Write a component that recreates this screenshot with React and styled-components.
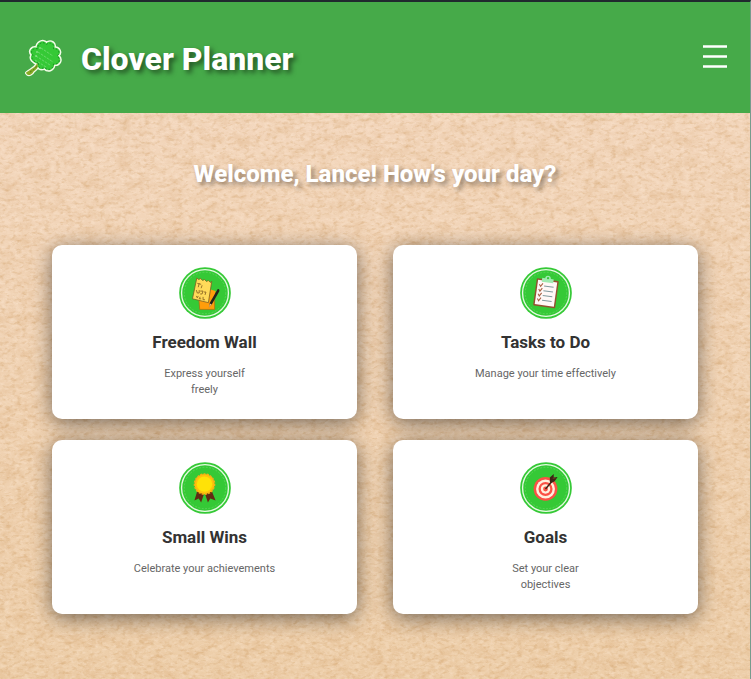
import React from "react";
import styled, { createGlobalStyle } from "styled-components";

const GlobalStyle = createGlobalStyle`
  *, *::before, *::after { box-sizing: border-box; }
  body {
    margin: 0;
    background: #f0d2b2;
    font-family: Roboto, sans-serif;
  }
`;

const Page = styled.div`
  position: relative;
  isolation: isolate;
  display: flex;
  flex-direction: column;
  min-height: 100vh;
  overflow: hidden;
  border-top: 2px solid #20292e;
  border-right: 1px solid #789b8d;
`;

const PaperTexture = styled.svg`
  position: absolute;
  inset: 0;
  z-index: -1;
  width: 100%;
  height: 100%;
`;

const Header = styled.header`
  display: flex;
  align-items: center;
  justify-content: space-between;
  padding: 32px 20px 32px 24px;
  background: #46aa49;
`;

const Brand = styled.div`
  display: flex;
  align-items: center;
  gap: 18px;
`;

const Logo = styled.svg`
  width: 39px;
  height: 39px;
`;

const BrandName = styled.h1`
  margin: 0;
  padding: 6px 0 3px;
  color: #fff;
  font-size: 32px;
  font-weight: 800;
  line-height: 38px;
  text-shadow: 3px 3px 5px rgba(0, 0, 0, 0.5);
`;

const MenuButton = styled.button`
  display: flex;
  padding: 2px 2px 6px;
  border: 0;
  background: none;
  color: #fff;
  cursor: pointer;
`;

const Main = styled.main`
  display: flex;
  flex-direction: column;
  gap: 56px;
  padding: 46px 52px 64px;
`;

const Welcome = styled.h2`
  margin: 0;
  color: #fff;
  font-size: 24px;
  font-weight: 800;
  line-height: 30px;
  text-align: center;
  text-shadow: 3px 3px 5px rgba(0, 0, 0, 0.4);
`;

const CardGrid = styled.div`
  display: grid;
  grid-template-columns: repeat(2, minmax(0, 1fr));
  gap: 21px 36px;
`;

const Card = styled.a`
  display: flex;
  flex-direction: column;
  align-items: center;
  min-height: 174px;
  padding: 21px 16px;
  border-radius: 10px;
  background: #fff;
  box-shadow: 0 4px 20px rgba(0, 0, 0, 0.5);
  text-align: center;
  text-decoration: none;
`;

const Badge = styled.svg`
  width: 54px;
  height: 54px;
`;

const CardTitle = styled.h3`
  margin: 12px 0 14px;
  color: #333;
  font-size: 17px;
  font-weight: 700;
  line-height: 20px;
`;

const CardText = styled.p`
  margin: 0;
  color: #666;
  font-size: 11px;
  line-height: 16px;
  white-space: pre-line;
`;

function Paper() {
  return (
    <PaperTexture aria-hidden="true">
      <defs>
        <linearGradient id="paper-tone" x1="0" y1="0" x2="0" y2="1">
          <stop offset="0" stopColor="#f4d8c0" />
          <stop offset="1" stopColor="#edcea9" />
        </linearGradient>
        <filter id="paper-grain" x="0" y="0" width="100%" height="100%" colorInterpolationFilters="sRGB">
          <feTurbulence type="fractalNoise" baseFrequency="0.06 0.09" numOctaves="5" seed="8" />
          <feColorMatrix values="0 0 0 0 0.82  0 0 0 0 0.62  0 0 0 0 0.4  0.6 0 0 0 -0.25" />
        </filter>
        <filter id="paper-fibre" x="0" y="0" width="100%" height="100%" colorInterpolationFilters="sRGB">
          <feTurbulence type="fractalNoise" baseFrequency="0.2 0.3" numOctaves="3" seed="31" />
          <feColorMatrix values="0 0 0 0 1  0 0 0 0 0.93  0 0 0 0 0.86  0 0.8 0 0 -0.34" />
        </filter>
        <filter id="paper-fleck" x="0" y="0" width="100%" height="100%" colorInterpolationFilters="sRGB">
          <feTurbulence type="fractalNoise" baseFrequency="0.18 0.3" numOctaves="3" seed="52" />
          <feColorMatrix values="0 0 0 0 0.76  0 0 0 0 0.55  0 0 0 0 0.3  0.8 0 0 0 -0.4" />
        </filter>
      </defs>
      <rect width="100%" height="100%" fill="url(#paper-tone)" />
      <rect width="100%" height="100%" filter="url(#paper-grain)" />
      <rect width="100%" height="100%" filter="url(#paper-fibre)" />
      <rect width="100%" height="100%" filter="url(#paper-fleck)" />
    </PaperTexture>
  );
}

const cloverPath =
  "M15 26C10 25 6 21 9 17C5 13 9 8 14 10C14 3 21 1 24 5C29 1 34 5 32 10C38 9 40 15 36 18C41 22 38 28 32 27C32 33 26 35 22 31C18 33 14 31 15 26Z";
const stemPath = "M16 27C14 31 10 32 6 35C8 38 11 35 12 33C14 31 17 30 16 27Z";

function CloverLogo() {
  return (
    <Logo viewBox="2 0 39 39" aria-hidden="true">
      <g fill="#f4fbe9" stroke="#f4fbe9" strokeWidth="4" strokeLinejoin="round">
        <path d={cloverPath} transform="translate(2 1) scale(.93)" />
        <path d={stemPath} transform="translate(-1 0)" />
      </g>
      <path d={cloverPath} transform="translate(2 1) scale(.93)" fill="#35c936" stroke="#35c936" />
      <path d={cloverPath} transform="translate(3 2) scale(.89)" fill="none" stroke="#168b21" strokeDasharray="2 2" />
      <path d={stemPath} transform="translate(-1 0)" fill="#87aa25" stroke="#87aa25" strokeWidth="1.6" />
      <path d="M8 34C10 33 13 31 15 28" fill="none" stroke="#537d18" strokeDasharray="2 1.5" />
      <path
        d="M19 10L31 18M16 14L31 24M14 18L28 27M13 22L24 29"
        fill="none"
        stroke="#8ee38d"
        strokeWidth=".6"
        strokeDasharray="2.5 1"
      />
      <g fill="#b2edad">
        <circle cx="18" cy="10" r=".8" />
        <circle cx="15" cy="14" r=".8" />
        <circle cx="14" cy="18" r=".8" />
      </g>
    </Logo>
  );
}

function NotesArt() {
  return (
    <>
      <path d="M21.5 32L38 30V45H22.5Z" fill="#ff9d0b" stroke="#aa6812" strokeWidth=".7" />
      <path d="M33 24L39 26L38 33H31Z" fill="#ff9d0b" />
      <path
        d="M19.5 12.5L21.5 14L23.5 13L25.5 15L27.5 14L29.5 16L31.5 15L33.5 17L35 16L31.5 38L15 34Z"
        fill="#ffda59"
        stroke="#775b20"
        strokeWidth=".8"
      />
      <path
        d="M20 18L24 19M22 18L21 22M25 20L24 23M19 25L20 28L22 28L22 25M23 26H26L25 29H23M27 27L29 27L28 30M19 31L20 33L21 31M23 32L22 34L24 34M26 32V35H28"
        fill="none"
        stroke="#7c571b"
        strokeWidth=".8"
      />
      <path d="M33 38L41 24Q43 23 43 26L35 40L32 43Z" fill="#24201c" />
      <path d="M33 39L35 40L32 43Z" fill="#f4bc71" />
    </>
  );
}

function TasksArt() {
  return (
    <g transform="rotate(8 28 28)">
      <rect x="16.5" y="14" width="23" height="28.5" rx="1" fill="#93512f" />
      <rect x="18" y="15.5" width="20" height="25.5" fill="#fff8f7" />
      <path d="M22 17V13H25C25 9 31 9 31 13H34V17Z" fill="#a0eab0" />
      <circle cx="28" cy="12.5" r="1.2" fill="#35c936" />
      <path d="M25 21H35M25 26H35M25 31H35M25 36H35" stroke="#839a9e" strokeWidth="1" />
      <path
        d="M20 20L21.5 22L23.5 18.5M20 25L21.5 27L23.5 23.5M20 30L21.5 32L23.5 28.5M20 35L21.5 37L23.5 33.5"
        fill="none"
        stroke="#a85f42"
        strokeWidth="1.1"
      />
    </g>
  );
}

function AwardArt() {
  return (
    <>
      <path d="M20 31L27 34L24 43L21.5 39L17 41Z" fill="#622b13" />
      <path d="M35 31L28 34L31 43L33.5 39L39 41Z" fill="#622b13" />
      <circle cx="27.5" cy="24" r="10.4" fill="#ffc20a" stroke="#f5ad16" strokeDasharray="2.2 1.2" strokeWidth="1.6" />
      <circle cx="27.5" cy="24" r="8" fill="#ffe207" />
    </>
  );
}

function TargetArt() {
  return (
    <>
      <circle cx="27.5" cy="29" r="12.3" fill="#fb5145" />
      <circle cx="27.5" cy="29" r="9.8" fill="#fff1de" />
      <circle cx="27.5" cy="29" r="7.3" fill="#fb5145" />
      <circle cx="27.5" cy="29" r="4.9" fill="#fff1de" />
      <circle cx="27.5" cy="29" r="2.5" fill="#fb5145" />
      <path d="M27.5 29L36 19" stroke="#3c2315" strokeWidth="1.5" />
      <path d="M32 22L32 17L36 13.5V17L40 16.5L37 21L33 23Z" fill="#3d2415" />
      <path d="M35 18L38 17.5" stroke="#854728" strokeWidth=".8" />
    </>
  );
}

const features = [
  { title: "Freedom Wall", text: "Express yourself\nfreely", href: "#freedom-wall", Art: NotesArt },
  { title: "Tasks to Do", text: "Manage your time effectively", href: "#tasks", Art: TasksArt },
  { title: "Small Wins", text: "Celebrate your achievements", href: "#wins", Art: AwardArt },
  { title: "Goals", text: "Set your clear\nobjectives", href: "#goals", Art: TargetArt },
];

function FeatureCard({ title, text, href, Art }) {
  return (
    <Card href={href}>
      <Badge viewBox="0 0 56 56" aria-hidden="true">
        <circle cx="28" cy="28" r="26.8" fill="#35c936" />
        <circle cx="28" cy="28" r="24.3" fill="none" stroke="#e6fae2" strokeWidth="1.4" />
        <circle cx="28" cy="28" r="21.5" fill="none" stroke="#7cdd77" strokeWidth=".5" strokeDasharray="2 1.5" />
        <Art />
      </Badge>
      <CardTitle>{title}</CardTitle>
      <CardText>{text}</CardText>
    </Card>
  );
}

export default function App() {
  return (
    <>
      <GlobalStyle />
      <Page>
        <Paper />
        <Header>
          <Brand>
            <CloverLogo />
            <BrandName>Clover Planner</BrandName>
          </Brand>
          <MenuButton type="button" aria-label="Open menu">
            <svg width="26" height="26" viewBox="0 0 26 26" aria-hidden="true">
              <path d="M1 3.5H25M1 13.5H25M1 23.5H25" stroke="currentColor" strokeWidth="2.6" />
            </svg>
          </MenuButton>
        </Header>
        <Main>
          <Welcome>Welcome, Lance! How's your day?</Welcome>
          <CardGrid>
            {features.map((feature) => (
              <FeatureCard key={feature.title} {...feature} />
            ))}
          </CardGrid>
        </Main>
      </Page>
    </>
  );
}
